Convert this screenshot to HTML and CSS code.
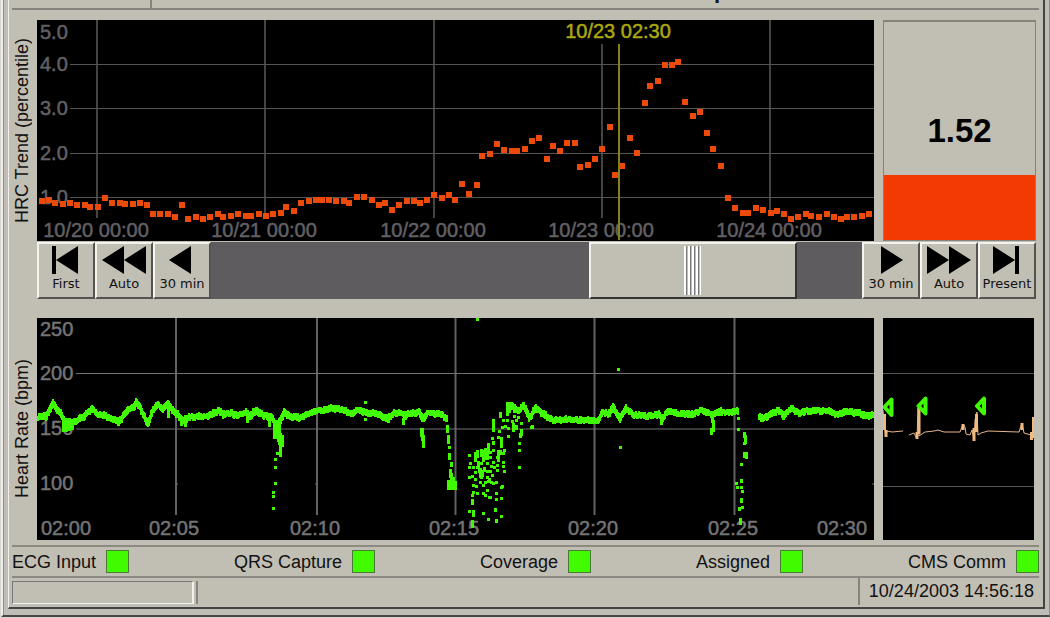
FILE: index.html
```html
<!DOCTYPE html>
<html lang="en">
<head>
<meta charset="utf-8">
<title>HRC Monitor</title>
<link rel="stylesheet" href="styles.css">
</head>
<body>
<div class="frame">
<main class="window">
  <header class="titlebar"><span class="titlebar-left"></span><span class="titlebar-name">p</span></header>

  <section class="monitor">
    <div class="axis"><span class="axis-label">HRC Trend (percentile)</span></div>
    <svg class="chart" viewBox="37 20 837 221" role="img" aria-label="HRC trend">
      <g class="grid">
        <path d="M97 20V218M265 20V218M434 20V218M602 44V218M770 20V216"/>
        <path d="M70 64.5H874M70 108.5H874M70 153.5H874M70 197.5H874"/>
      </g>
      <g class="tick">
        <text x="40" y="39">5.0</text><text x="40" y="71">4.0</text><text x="40" y="115">3.0</text><text x="40" y="160">2.0</text><text x="40" y="204">1.0</text>
        <text x="96" y="237" text-anchor="middle">10/20 00:00</text>
        <text x="264" y="237" text-anchor="middle">10/21 00:00</text>
        <text x="433" y="237" text-anchor="middle">10/22 00:00</text>
        <text x="601" y="237" text-anchor="middle">10/23 00:00</text>
        <text x="769" y="237" text-anchor="middle">10/24 00:00</text>
      </g>
      <path class="cursor-line" d="M619 44V240"/>
      <text class="cursor-text" x="618" y="38" text-anchor="middle">10/23 02:30</text>
      <path id="hrc" class="hrc"/>
    </svg>
    <div class="gauge"><div class="gauge-fill" style="height:29.6%"></div><span class="gauge-value">1.52</span></div>

    <nav class="toolbar">
      <button class="nav-button" type="button"><svg class="nav-icon" viewBox="0 0 48 28"><path d="M10 0h4v28h-4zM14 14L36 0V28z"/></svg>First</button>
      <button class="nav-button" type="button"><svg class="nav-icon" viewBox="0 0 48 28"><path d="M2 14L24 0V28zM24 14L46 0V28z"/></svg>Auto</button>
      <button class="nav-button" type="button"><svg class="nav-icon" viewBox="0 0 48 28"><path d="M11 14L33 0V28z"/></svg>30 min</button>
      <input class="scroller" type="range" min="0" max="1000" value="853" aria-label="Time position">
      <button class="nav-button" type="button"><svg class="nav-icon" viewBox="0 0 48 28"><path d="M14 0L36 14L14 28z"/></svg>30 min</button>
      <button class="nav-button" type="button"><svg class="nav-icon" viewBox="0 0 48 28"><path d="M2 0L24 14L2 28zM24 0L46 14L24 28z"/></svg>Auto</button>
      <button class="nav-button" type="button"><svg class="nav-icon" viewBox="0 0 48 28"><path d="M10 0L32 14L10 28zM32 0h4v28h-4z"/></svg>Present</button>
    </nav>

    <div class="axis"><span class="axis-label">Heart Rate (bpm)</span></div>
    <svg class="chart" viewBox="37 318 837 222" role="img" aria-label="Heart rate">
      <g class="grid grid-bright">
        <path d="M176 318V515M317 318V515M455.5 318V515M594.5 318V515M734.5 318V515"/>
        <path d="M76 373.5H874M76 429H874M872 484H874M176 484H178M315 484H317"/>
      </g>
      <g class="tick tick-bright">
        <text x="40" y="336">250</text><text x="40" y="380">200</text><text x="40" y="435">150</text><text x="40" y="490">100</text>
        <text x="41" y="535">02:00</text>
        <text x="174" y="535" text-anchor="middle">02:05</text>
        <text x="315" y="535" text-anchor="middle">02:10</text>
        <text x="454" y="535" text-anchor="middle">02:15</text>
        <text x="593" y="535" text-anchor="middle">02:20</text>
        <text x="733" y="535" text-anchor="middle">02:25</text>
        <text x="842" y="535" text-anchor="middle">02:30</text>
      </g>
      <path id="rate" class="rate"/>
    </svg>
    <div class="ecg-panel">
    <svg class="chart" viewBox="883 318 151 222" role="img" aria-label="ECG">
      <path class="grid" d="M883 373.5H1034M883 486.5H1034"/>
      <path class="ecg" d="M883 410L884.5 428L886 437L887 431L892 432L903 431M909 435L914 433L917 439L918 408L919 408L919 436L922 434L925 432L934 431L938 430L944 432L960 432L963 424L965 427L966 434L970 435L972 430L974 440L975 420L977 412L978 435L981 433L988 431L1019 432L1022 423L1024 433L1031 435L1032 440L1034 418"/>
      <path class="ecg-spike" d="M884.5 414V430M886 430V437M917 432V439M919 408V434M963 424V430M974 428V441M976.500 414V432M1022 423V430M1031.500 432V440M1033.500 417V438"/>
      <path class="beat" d="M884.500 407L891.500 399.500V415zM918.500 406L925.500 398.500V413.500zM977 406L984 398.500V413.500z"/>
    </svg>
    </div>
  </section>

  <section class="status">
    <span class="status-item">ECG Input<i class="lamp"></i></span>
    <span class="status-item">QRS Capture<i class="lamp"></i></span>
    <span class="status-item">Coverage<i class="lamp"></i></span>
    <span class="status-item">Assigned<i class="lamp"></i></span>
    <span class="status-item">CMS Comm<i class="lamp"></i></span>
  </section>
  <footer class="footer">
    <span class="progress"></span>
    <time class="clock">10/24/2003 14:56:18</time>
  </footer>
</main>
</div>
<script src="charts.js"></script>
</body>
</html>
```
FILE: styles.css
```css
* { box-sizing: border-box; }
body {
  margin: 0;
  background: #d6d5d0;
  color: #111;
  font: 18px/20px "Liberation Sans", Arial, sans-serif;
}
.frame {
  margin-left: 1px;
  padding: 0 4px 6px 5px;
  background: #bfbdb6;
  border: solid;
  border-width: 0 1px 2px 2px;
  border-color: #fff #8a8986 #484745 #efeeea;
  box-shadow: inset 1px 0 #8f8e8b;
}
.window {
  padding: 0 4px 2px 3px;
  background: #c1beb4;
  border: solid;
  border-width: 0 2px 2px 1px;
  border-color: #fff #444 #444 #f2f1ed;
}
.titlebar {
  display: flex;
  height: 10px;
  overflow: hidden;
  border-bottom: 2px solid #85837c;
}
.titlebar-left {
  flex: 0 0 140px;
  border-right: 2px solid #85837c;
}
.titlebar-name {
  flex: 1;
  margin-top: -9px;
  padding-left: 562px;
  font-size: 22px;
  font-weight: bold;
  line-height: 0;
}
.monitor {
  display: grid;
  grid-template-columns: 25px minmax(0, 1fr) 162px;
  padding: 10px 3px 5px 0;
}
.axis {
  display: flex;
  align-items: center;
}
.axis-label {
  writing-mode: vertical-rl;
  rotate: 180deg;
  white-space: nowrap;
}
.chart {
  display: block;
  width: 100%;
  background: #000;
}
.ecg-panel { padding: 0 2px 0 9px; }
.grid { stroke: #555; stroke-width: 1; fill: none; }
.grid path:first-child { stroke: #444; stroke-width: 2; }
.grid-bright { stroke: #727272; }
.grid-bright path:first-child { stroke: #626262; stroke-width: 2; }
.tick text, .cursor-text { font-size: 20px; }
.tick text { fill: #626064; stroke: #626064; stroke-width: .5px; }
.tick-bright text { fill: #747474; stroke: #747474; }
.cursor-line { stroke: #85821a; stroke-width: 2; }
.cursor-text { fill: #aaa710; stroke: #aaa710; stroke-width: .5px; }
.hrc { fill: #ec4a08; }
.rate { fill: #40fb00; }
.ecg { fill: none; stroke: #e6b587; stroke-width: 1; }
.ecg-spike { fill: none; stroke: #efb982; stroke-width: 3; }
.beat { fill: #000; stroke: #40fb00; stroke-width: 4; stroke-linejoin: round; }
.gauge {
  position: relative;
  display: flex;
  align-items: center;
  justify-content: center;
  margin-left: 9px;
  border: 2px solid #85837c;
  border-width: 2px 1px 1px;
}
.gauge-value {
  position: relative;
  color: #000;
  font-size: 33px;
  font-weight: bold;
}
.gauge-fill {
  position: absolute;
  inset: auto 0 0;
  background: #f23a02;
}
.toolbar {
  grid-column: 2 / 4;
  display: flex;
  margin: 1px 0 19px;
  background: #5f5c60;
}
.nav-button {
  flex: 0 0 58px;
  height: 57px;
  padding: 2px 0;
  display: flex;
  flex-direction: column;
  align-items: center;
  background: #c1beb4;
  border: 2px solid;
  border-color: #f4f3ee #55534f #55534f #f4f3ee;
  color: #111;
  font: 13px/20px "DejaVu Sans", sans-serif;
}
.nav-icon { width: 48px; height: 28px; fill: #000; }
.scroller {
  appearance: none;
  flex: 1;
  min-width: 0;
  height: 57px;
  margin: 0;
  background: #5f5c60;
}
.scroller::-webkit-slider-thumb {
  appearance: none;
  width: 208px;
  height: 57px;
  border: 2px solid;
  border-color: #f4f3ee #333 #333 #f4f3ee;
  border-radius: 0;
  background:
    repeating-linear-gradient(90deg, #fff 0 2px, #777 2px 3px, #c1beb4 3px 4px) center / 17px 49px no-repeat,
    #c1beb4;
}
.status {
  display: flex;
  justify-content: space-between;
  padding: 3px 0;
  border: 2px solid #8b8982;
  border-width: 2px 0;
}
.status-item { display: flex; align-items: center; gap: 10px; }
.lamp {
  width: 23px;
  height: 23px;
  background: #41fb00;
  border: 1px solid #4b7a38;
}
.footer {
  display: flex;
  justify-content: space-between;
  height: 27px;
}
.progress {
  flex: 0 0 182px;
  margin: 3px 0 1px;
  border: 1px solid;
  border-width: 1px 2px 1px 1px;
  border-color: #777 #f1f0ec #f1f0ec #777;
  box-shadow: 2px 0 #c1beb4, 4px 0 #85837c;
}
.clock {
  padding: 3px 5px 0 9px;
  border-left: 2px solid #85837c;
}
```
FILE: charts.js
```js
// Samples are stored in thirds of a plot unit.
const THIRD = 3;
const square = (x, y, w, h) => `M${x} ${y}h${w}v${h}h${-w}z`;

const hrc = [
  126,603,148,600,166,608,189,612,210,608,232,616,254,616,270,621,293,621,315,594,337,608,359,608,376,612,399,612,
  420,608,442,616,459,643,481,643,504,643,526,652,547,616,565,656,587,652,609,656,631,652,653,643,670,652,692,647,
  715,643,737,647,753,647,777,643,798,647,820,643,842,638,859,621,881,634,904,608,926,603,949,599,965,599,987,599,
  1009,603,1031,603,1048,608,1070,590,1093,590,1115,599,1137,616,1154,608,1176,630,1198,616,1220,603,1242,603,
  1259,608,1282,599,1303,586,1325,595,1347,586,1364,599,1386,551,1408,582,1430,555,1447,467,1469,463,1491,432,
  1513,450,1536,454,1552,454,1574,446,1596,424,1618,415,1640,476,1658,437,1680,454,1702,428,1724,428,1741,502,
  1763,494,1785,476,1806,446,1829,380,1846,524,1867,498,1890,415,1912,459,1934,310,1951,257,1973,244,1995,196,
  2017,196,2035,187,2056,306,2079,349,2101,336,2122,398,2140,446,2162,498,2184,595,2206,625,2228,638,2245,638,
  2267,625,2290,630,2312,638,2330,634,2352,643,2374,656,2395,652,2418,643,2434,647,2458,652,2480,643,2502,652,
  2524,656,2540,652,2562,652,2585,647,2607,643
];
let d = "";
for (let i = 0; i < hrc.length; i += 2) {
  d += square(Math.round(hrc[i] / THIRD) - 3, Math.round(hrc[i + 1] / THIRD) - 3, 6, 6);
}
document.getElementById("hrc").setAttribute("d", d);

const TOP = 310;
const runs = [
  [110,322,125,318,135,320,156,280,165,295,180,312,190,335,205,345,220,336,240,325,275,297,290,312,310,315,330,325,
   355,335,370,315,385,298,400,290,407,278,420,300,440,340,455,300,470,285,485,295,500,280,515,300,530,315,545,333,
   560,322,590,320,620,320,650,302,670,315,690,308,710,318,735,308,745,320,765,300,790,318,810,322],
  [750,320,765,300,785,315,810,320,825,345,840,330,850,306,870,320,900,322,935,305,970,300,1005,294,1030,302,1050,312,
   1070,300,1095,308,1125,310,1160,325,1180,308,1220,314,1255,305,1265,325,1280,308,1310,312,1333,320],
  [1517,292,1530,290,1550,302,1568,288,1585,325,1605,295,1630,315,1655,330,1700,328,1740,330,1790,330,1805,308,
   1820,312,1837,292,1858,325,1875,295,1900,315,1940,318,1970,312,1982,325,2000,305,2030,310,2070,312,2100,303,
   2135,312,2160,305,2190,308,2214,300],
  [2275,320,2290,325,2310,310,2335,302,2348,315,2372,295,2395,310,2420,302,2450,303,2485,303,2505,312,2530,305,
   2570,308,2595,318,2623,312]
];

// Small deterministic generator, so that the trace is the same on each load.
let seed = 7;
const rnd = () => (seed = (seed * 16807) % 2147483647) / 2147483647;

d = "";
for (const r of runs) {
  for (let i = 0; i + 3 < r.length; i += 2) {
    const [x0, y0, x1, y1] = r.slice(i, i + 4);
    for (let x = x0; x < x1; x += 3) {
      const y = y0 + (y1 - y0) * (x - x0) / (x1 - x0);
      const slope = Math.min(5, Math.abs((y1 - y0) / (x1 - x0)));
      const h = 5 + Math.round(slope + rnd() * 2);
      d += square(Math.round(x / THIRD), Math.round(TOP + y / THIRD - h / 2 + (rnd() - 0.5) * 2), 2, h);
    }
  }
}

// Short vertical drops: x, top, bottom.
const drops = [
  187,325,365, 195,325,365, 203,325,362, 212,330,360, 220,325,345, 500,290,325, 540,320,347, 553,330,350, 738,315,340,
  805,318,352, 818,340,388, 824,340,388, 830,345,395, 837,370,440, 833,340,405, 828,425,435, 843,375,410,
  1263,320,337, 1259,355,380, 1262,355,392, 1265,375,415,
  1336,315,337, 1338,345,370, 1341,375,403, 1345,408,418, 1343,430,450, 1350,457,472, 1347,478,505, 1342,510,540,
  1350,490,540, 1357,500,540, 1362,512,540, 1156,320,337, 1207,325,345, 1161,325,340,
  1517,275,318, 1523,275,310, 1530,275,300, 1540,290,310, 1476,328,365, 1496,312,325, 1540,315,325, 1537,340,365,
  1545,345,360, 1559,358,378, 1556,370,385, 1593,345,357, 1422,425,455, 1427,420,445, 1440,418,440, 1447,420,455,
  1453,415,450, 1460,398,430, 1457,430,450, 1476,392,405, 1499,380,410, 1490,420,455, 1500,395,415, 1433,475,490,
  1438,475,505, 1444,480,500, 1430,460,475, 1449,470,485, 1413,568,585, 1415,600,620, 1483,595,607, 1485,628,640,
  1412,630,655, 1980,330,345, 2132,320,340, 2136,330,365, 2131,355,375, 2230,365,385, 2233,375,402, 2228,395,405,
  2230,427,445, 2236,425,448, 2220,507,520, 2222,540,550, 2219,565,578, 2213,592,602, 2222,588,598, 2217,625,645,
  2279,312,335, 2285,315,330, 2347,315,330, 2613,305,325
];
for (let i = 0; i < drops.length; i += 3) {
  const y = Math.round(TOP + drops[i + 1] / THIRD);
  d += square(Math.round(drops[i] / THIRD), y, 3, Math.round(TOP + drops[i + 2] / THIRD) - y);
}

// Isolated beats.
const dots = [
  825,447,825,470,825,518,820,545,820,558,820,593,1094,276,1094,328,1430,26,1855,176,1860,412,1387,692,1408,692,
  2260,692,2270,692,1558,400,1558,421,1557,472,1593,350,1523,355,1523,378,1505,350,1508,330,1520,330,1514,348,
  1408,435,1409,458,1408,470,1408,500,1417,498,1419,470,1430,470,1425,487,1418,545,1430,548,1420,525,1428,527,
  1449,525,1450,550,1455,515,1455,555,1462,500,1465,512,1468,508,1466,562,1472,515,1478,520,1487,550,1489,568,
  1488,515,1504,563,1507,527,1504,530,1504,619,1448,610,1465,628,1485,600,1408,602,1416,555,1424,508,1440,515,
  1470,440,1474,468,1471,482,1480,455,1490,440,1492,465,1490,480,1500,430,1510,430,1510,455,1509,468,1511,484,
  1499,422,1513,421,1480,420,1496,362,1495,380,1476,385,1470,425,1460,460,1462,482,1475,495,1483,470,
  1214,325,2215,325,2213,356,2222,462,2207,520,2212,532,2222,530,2222,572,1535,332,1548,330,1553,320,1562,338,
  1500,310,1470,560,1460,540,1442,500,1434,455,1443,460
];
for (let i = 0; i < dots.length; i += 2) {
  d += square(Math.round(dots[i] / THIRD) - 1, Math.round(TOP + dots[i + 1] / THIRD) - 1, 3, 3);
}
document.getElementById("rate").setAttribute("d", d);
```
